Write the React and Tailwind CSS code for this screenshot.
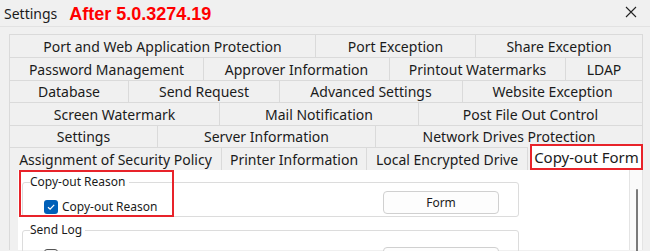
const tabRows = [
  { h: 'h-[23px]', tabs: [['Port and Web Application Protection', 'w-[306px]'], ['Port Exception', 'w-[160px]'], ['Share Exception', 'w-[167px]']] },
  { h: 'h-[23px]', tabs: [['Password Management', 'w-[194px]'], ['Approver Information', 'w-[186px]'], ['Printout Watermarks', 'w-[176px]'], ['LDAP', 'w-[77px]']] },
  { h: 'h-[22px]', tabs: [['Database', 'w-[119px]'], ['Send Request', 'w-[151px]'], ['Advanced Settings', 'w-[183px]'], ['Website Exception', 'w-[180px]']] },
  { h: 'h-[23px]', tabs: [['Screen Watermark', 'w-[210px]'], ['Mail Notification', 'w-[199px]'], ['Post File Out Control', 'w-[224px]']] },
  { h: 'h-[22px]', tabs: [['Settings', 'w-[148px]'], ['Server Information', 'w-[218px]'], ['Network Drives Protection', 'w-[267px]']] },
]

const lastRow = [['Assignment of Security Policy', 'w-[212px]'], ['Printer Information', 'w-[145px]'], ['Local Encrypted Drive', 'w-[161px]']]

const tabClass = "flex items-center justify-center border-r border-t border-[#dadada] bg-[#f0f0f0] text-[14px] text-[#1b1b1b] whitespace-nowrap"

function GroupBox({ title, children, className }) {
  return (
    <div className={"relative ml-[4px] w-[497px] border border-[#dcdcdc] rounded-[3px] " + className}>
      <span className="absolute left-[7px] top-[-9px] bg-white pr-[3px] text-[12px] leading-[16px] text-[#1b1b1b]">{title}</span>
      {children}
    </div>
  )
}

export default function App() {
  return (
    <div className="w-[650px] h-[251px] overflow-hidden bg-[#f0f0f0] font-['Noto_Sans',sans-serif] relative">
      {/* title bar */}
      <div className="h-[27px] flex items-center border-b border-[#e2e2e2] relative">
        <span className="ml-[4px] text-[14px] text-[#1b1b1b] font-['Noto_Sans',sans-serif]">Settings</span>
        <span className="ml-[12px] mt-[2px] text-[18px] font-bold text-[#f00] font-['Liberation_Sans',sans-serif]">After 5.0.3274.19</span>
        <svg className="absolute right-[13px] top-[6px]" width="12" height="12" viewBox="0 0 12 12">
          <path d="M1 1L11 11M11 1L1 11" stroke="#222" strokeWidth="1.1" />
        </svg>
      </div>

      <div className="mt-[7px] ml-[9px] w-[634px]">
        {tabRows.map((row, i) => (
          <div key={i} className={"flex border-l border-[#dadada] " + row.h}>
            {row.tabs.map(([label, w]) => (
              <div key={label} className={tabClass + " " + w}>{label}</div>
            ))}
          </div>
        ))}
        <div className="flex h-[23px] border-l border-[#dadada]">
          {lastRow.map(([label, w]) => (
            <div key={label} className={tabClass + " " + w}>{label}</div>
          ))}
          <div className="relative w-[115px]">
            <div className="absolute left-[2px] right-[0px] top-[-3px] h-[26px] bg-white flex items-center justify-center text-[15px] text-[#1b1b1b] whitespace-nowrap border-2 border-[#e8232a]">
              Copy-out Form
            </div>
          </div>
        </div>

        {/* panel */}
        <div className="flex h-[80px] border-l border-[#dadada] pl-[8px]">
          <div className="flex-1 bg-white relative pt-[12px]">
            <GroupBox title="Copy-out Reason" className="h-[35px]">
              <div className="flex items-center pl-[21px] pt-[15px]">
                <span className="w-[14px] h-[14px] rounded-[3px] bg-[#005fb8] flex items-center justify-center">
                  <svg width="10" height="10" viewBox="0 0 10 10">
                    <path d="M2 5.2L4.1 7.2L8.2 2.8" stroke="white" strokeWidth="1.2" fill="none" />
                  </svg>
                </span>
                <span className="ml-[4px] text-[12px] text-[#1b1b1b]">Copy-out Reason</span>
              </div>
              <div className="absolute left-[360px] top-[8px] w-[116px] h-[23px] rounded-[4px] border border-[#d0d0d0] bg-[#fdfdfd] flex items-center justify-center text-[12px] text-[#1b1b1b]">
                Form
              </div>
            </GroupBox>
            <GroupBox title="Send Log" className="mt-[13px] h-[40px]">
              <div className="absolute left-[21px] top-[18px] w-[14px] h-[14px] rounded-[3px] border border-[#555]" />
              <div className="absolute left-[360px] top-[16px] w-[116px] h-[23px] rounded-[4px] border border-[#d0d0d0] bg-[#fdfdfd]" />
            </GroupBox>
            <div className="absolute left-[1px] top-[0px] w-[155px] h-[47px] border-2 border-[#e8232a]" />
          </div>
          <div className="w-[14px] bg-[#fafafa] border-l border-r border-[#e4e4e4] relative">
            <div className="absolute left-[6px] top-[19px] w-[2px] h-[90px] bg-[#7a7a7a] rounded-full" />
          </div>
        </div>
      </div>
    </div>
  )
}
